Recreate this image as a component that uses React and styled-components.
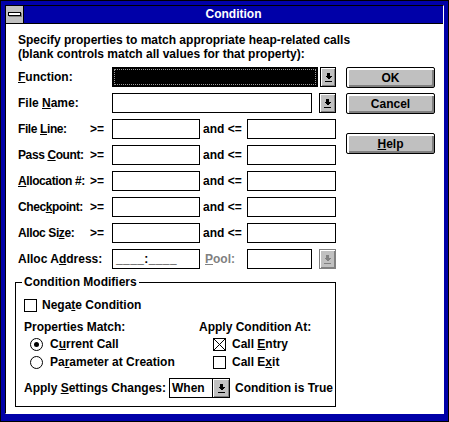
import React from "react";
import styled, { createGlobalStyle, css } from "styled-components";

const Global = createGlobalStyle`
  html, body { margin: 0; padding: 0; background: #fff; }
  body { font-family: "Liberation Sans", Arial, sans-serif; }
`;

const BLUE = "#0000a8";
const GRAY = "#c0c0c0";
const DARK = "#808080";

const Frame = styled.div`
  width: 449px;
  height: 422px;
  box-sizing: border-box;
  border: 1px solid #000;
  background: ${BLUE};
  padding: 4px 4px 7px 4px;
  display: flex;
`;

const Window = styled.div`
  flex: 1;
  display: flex;
  flex-direction: column;
  border-top: 1px solid #000;
  border-left: 1px solid #000;
  border-right: 1px solid #fff;
  border-bottom: 1px solid #fff;
  background: #fff;
  font: bold 12px/14px "Liberation Sans", Arial, sans-serif;
  color: #000;
`;

const TitleBar = styled.div`
  height: 17px;
  display: flex;
  background: ${BLUE};
  border-bottom: 1px solid #000;
`;

const SysMenu = styled.div`
  width: 17px;
  background: ${GRAY};
  border-right: 1px solid #000;
  display: flex;
  align-items: center;
  justify-content: center;
`;

const Title = styled.div`
  flex: 1;
  color: #fff;
  text-align: center;
  line-height: 17px;
`;

const Client = styled.div`
  flex: 1;
  display: flex;
  flex-direction: column;
  padding: 9px 0 0 12px;
`;

const Intro = styled.div`
  line-height: 14px;
`;

const Top = styled.div`
  display: flex;
  gap: 10px;
  margin-top: 6px;
`;

const Form = styled.div`
  display: grid;
  grid-template-columns: 72px 22px 88px 47px 89px;
  grid-auto-rows: 20px;
  row-gap: 6px;
  align-items: center;
`;

const Label = styled.div`
  grid-column: span ${(p) => p.$span || 1};
  white-space: nowrap;
  color: ${(p) => (p.$disabled ? DARK : "#000")};
  padding-left: ${(p) => p.$indent || 0}px;
  letter-spacing: ${(p) => p.$ls ?? 0}px;
`;

const Edit = styled.div`
  grid-column: span ${(p) => p.$span || 1};
  height: 20px;
  box-sizing: border-box;
  border: 1px solid #000;
  background: #fff;
  font-weight: bold;
  padding-left: 3px;
  line-height: 18px;
  letter-spacing: 0.4px;
  white-space: nowrap;
`;

const Combo = styled.div`
  grid-column: span ${(p) => p.$span || 1};
  display: flex;
  gap: ${(p) => p.$gap ?? 7}px;
  height: 20px;
`;

const ComboField = styled.div`
  flex: 1;
  box-sizing: border-box;
  border: 1px solid #000;
  background: #fff;
`;

const SelectedField = styled.div`
  flex: 1;
  box-sizing: border-box;
  border: 1px solid #000;
  background: #000;
  padding: 1px;
  display: flex;
`;

const FocusRect = styled.div`
  flex: 1;
  border: 1px dotted #9a9a9a;
`;

const DropBtn = styled.div`
  width: ${(p) => p.$w || 17}px;
  box-sizing: border-box;
  border: 1px solid ${(p) => (p.$disabled ? DARK : "#000")};
  background: ${GRAY};
  box-shadow: inset 1px 1px #fff, inset -1px -1px ${DARK};
  display: flex;
  align-items: center;
  justify-content: center;
`;

const ButtonCol = styled.div`
  width: 89px;
  display: flex;
  flex-direction: column;
  gap: 5px;
`;

const PushButton = styled.div`
  height: 21px;
  box-sizing: border-box;
  border: 1px solid #000;
  border-radius: 2px;
  background: ${GRAY};
  box-shadow: inset 2px 2px #fff, inset -2px -2px ${DARK};
  display: flex;
  align-items: center;
  justify-content: center;
  line-height: 14px;
  ${(p) => p.$gapTop && css`margin-top: ${p.$gapTop}px;`}
`;

const Group = styled.fieldset`
  margin: 6px 0 0 -3px;
  width: 321px;
  box-sizing: border-box;
  border: 1px solid #000;
  padding: 0 0 8px 8px;
  display: flex;
  flex-direction: column;
`;

const Legend = styled.legend`
  padding: 0 2px;
  margin-left: -2px;
  line-height: 14px;
`;

const CheckRow = styled.div`
  display: flex;
  align-items: center;
  gap: ${(p) => p.$gap ?? 5}px;
  height: 18px;
  padding-left: ${(p) => p.$indent || 0}px;
  margin-top: ${(p) => p.$mt || 0}px;
`;

const Box = styled.div`
  width: 13px;
  height: 13px;
  box-sizing: border-box;
  border: 1px solid #000;
  background: #fff;
  display: flex;
`;

const Radio = styled.div`
  width: 13px;
  height: 13px;
  box-sizing: border-box;
  border: 1px solid #000;
  border-radius: 50%;
  background: #fff;
  display: flex;
  align-items: center;
  justify-content: center;
  &::after {
    content: "";
    width: 5px;
    height: 5px;
    border-radius: 50%;
    background: ${(p) => (p.$on ? "#000" : "transparent")};
  }
`;

const Columns = styled.div`
  display: flex;
  margin-top: 6px;
`;

const Col = styled.div`
  width: ${(p) => p.$w}px;
  display: flex;
  flex-direction: column;
`;

const Heading = styled.div`
  height: 15px;
  line-height: 14px;
`;

const SettingsRow = styled.div`
  display: flex;
  align-items: center;
  margin-top: 7px;
  height: 20px;
`;

const WhenCombo = styled.div`
  display: flex;
  height: 20px;
  width: 61px;
  box-sizing: border-box;
  border: 1px solid #000;
  margin: 0 5px 0 3px;
`;

const WhenText = styled.div`
  flex: 1;
  padding-left: 2px;
  line-height: 18px;
`;

const WhenBtn = styled(DropBtn)`
  border-width: 0 0 0 1px;
`;

const Arrow = ({ disabled }) => (
  <svg width="7" height="9" viewBox="0 0 7 9" shapeRendering="crispEdges">
    <g fill={disabled ? DARK : "#000"}>
      <rect x="2" y="0" width="3" height="3" />
      <polygon points="0,3 7,3 3.5,6.5" />
      <rect x="0" y="7.5" width="7" height="1.5" />
    </g>
  </svg>
);

const SysBar = () => (
  <svg width="14" height="5" viewBox="0 0 14 5" shapeRendering="crispEdges">
    <rect x="1" y="1" width="13" height="4" fill={DARK} />
    <rect x="0.5" y="0.5" width="12" height="3" fill="#fff" stroke="#000" />
  </svg>
);

const XMark = () => (
  <svg width="11" height="11" viewBox="0 0 11 11">
    <path d="M0 0 L11 11 M11 0 L0 11" stroke="#000" strokeWidth="1" />
  </svg>
);

const U = styled.span`
  text-decoration: underline;
  text-underline-offset: 1px;
`;

const rangeRows = [
  { label: <>File <U>L</U>ine:</> },
  { label: <>Pass <U>C</U>ount:</> },
  { label: <><U>A</U>llocation #:</> },
  { label: <>Chec<U>k</U>point:</> },
  { label: <>Alloc Si<U>z</U>e:</> },
];

export default function App() {
  return (
    <>
      <Global />
      <Frame>
        <Window>
          <TitleBar>
            <SysMenu>
              <SysBar />
            </SysMenu>
            <Title>Condition</Title>
          </TitleBar>
          <Client>
            <Intro>
              Specify properties to match appropriate heap-related calls
              <br />
              (blank controls match all values for that property):
            </Intro>
            <Top>
              <Form>
                <Label $span={2}>
                  <U>F</U>unction:
                </Label>
                <Combo $span={3} $gap={2}>
                  <SelectedField>
                    <FocusRect />
                  </SelectedField>
                  <DropBtn $w={16}>
                    <Arrow />
                  </DropBtn>
                </Combo>

                <Label $span={2}>
                  File <U>N</U>ame:
                </Label>
                <Combo $span={3}>
                  <ComboField />
                  <DropBtn>
                    <Arrow />
                  </DropBtn>
                </Combo>

                {rangeRows.map((r, i) => (
                  <React.Fragment key={i}>
                    <Label $ls={-0.4}>{r.label}</Label>
                    <Label>&gt;=</Label>
                    <Edit />
                    <Label $indent={3}>and &lt;=</Label>
                    <Edit />
                  </React.Fragment>
                ))}

                <Label $span={2}>
                  Alloc A<U>d</U>dress:
                </Label>
                <Edit>____:____</Edit>
                <Label $indent={5} $disabled>
                  <U>P</U>ool:
                </Label>
                <Combo>
                  <ComboField />
                  <DropBtn $disabled>
                    <Arrow disabled />
                  </DropBtn>
                </Combo>
              </Form>
              <ButtonCol>
                <PushButton>OK</PushButton>
                <PushButton>Cancel</PushButton>
                <PushButton $gapTop={14}>
                  <U>H</U>elp
                </PushButton>
              </ButtonCol>
            </Top>

            <Group>
              <Legend>Condition Modifiers</Legend>
              <CheckRow $mt={7}>
                <Box />
                <span>
                  Nega<U>t</U>e Condition
                </span>
              </CheckRow>
              <Columns>
                <Col $w={175}>
                  <Heading>Properties Match:</Heading>
                  <CheckRow $indent={6} $gap={7}>
                    <Radio $on />
                    <span>
                      C<U>u</U>rrent Call
                    </span>
                  </CheckRow>
                  <CheckRow $indent={6} $gap={7}>
                    <Radio />
                    <span>
                      Pa<U>r</U>ameter at Creation
                    </span>
                  </CheckRow>
                </Col>
                <Col $w={130}>
                  <Heading>Apply Condition At:</Heading>
                  <CheckRow $indent={14} $gap={6}>
                    <Box>
                      <XMark />
                    </Box>
                    <span>
                      Call <U>E</U>ntry
                    </span>
                  </CheckRow>
                  <CheckRow $indent={14} $gap={6}>
                    <Box />
                    <span>
                      Call E<U>x</U>it
                    </span>
                  </CheckRow>
                </Col>
              </Columns>
              <SettingsRow>
                <span>
                  Apply <U>S</U>ettings Changes:
                </span>
                <WhenCombo>
                  <WhenText>When</WhenText>
                  <WhenBtn $w={17}>
                    <Arrow />
                  </WhenBtn>
                </WhenCombo>
                <span>Condition is True</span>
              </SettingsRow>
            </Group>
          </Client>
        </Window>
      </Frame>
    </>
  );
}
